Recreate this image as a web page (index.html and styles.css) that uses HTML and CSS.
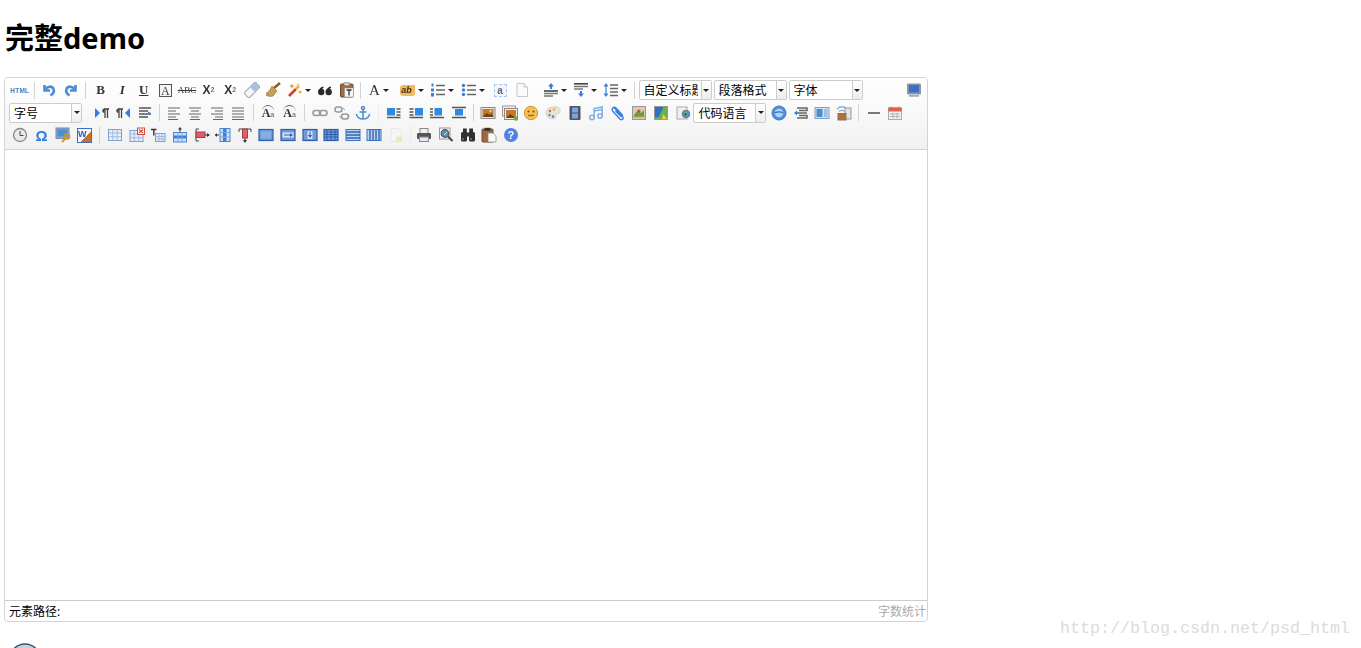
FILE: index.html
```html
<!DOCTYPE html>
<html lang="zh">
<head>
<meta charset="utf-8">
<title>完整demo</title>
<link rel="stylesheet" href="styles.css">
</head>
<body>
<svg class="defs" aria-hidden="true">
<symbol id="undo" viewBox="0 0 16 16"><path d="M3.5 3v5.5H9M4 8C6 4 11 3.500 12.500 7c1 2.500-.5 5-3 6.500" fill="none" stroke="#4a8ed8" stroke-width="2.600"/></symbol>
<symbol id="redo" viewBox="0 0 16 16"><path d="M12.500 3v5.500H7M12 8C10 4 5 3.500 3.500 7c-1 2.500.5 5 3 6.500" fill="none" stroke="#4a8ed8" stroke-width="2.600"/></symbol>
<symbol id="eraser" viewBox="0 0 16 16"><g transform="rotate(45 8 8)"><rect x="4.500" y="0" width="7" height="16" rx="1.500" fill="#f5f7fa" stroke="#9aa"/><rect x="5" y="0.500" width="6" height="7" fill="#a9bfe0"/></g></symbol>
<symbol id="brush" viewBox="0 0 16 16"><path d="M15 1L9 6" stroke="#8a5a2a" stroke-width="2.400"/><path d="M7 4l5 5-4 5c-2 1-6 0-7-1 2 0 3-1 3-1-1 0-2 0-3-1 2 0 4-3 6-7z" fill="#c9a05a" stroke="#8e6a30" stroke-width=".6"/></symbol>
<symbol id="wand" viewBox="0 0 16 16"><path d="M2 14l7-7" stroke="#d0402a" stroke-width="2.600"/><path d="M9 7l3-3" stroke="#e9b23a" stroke-width="2.600"/><path d="M5 2l1 1.500L7.500 4 6 5 5 6.500 4 5 2.500 4 4 3zM13 8l.7 1.200 1.300.8-1.300.8L13 12l-.7-1.200L11 10l1.300-.8z" fill="#f0a030"/><path d="M11 1l.5 1 1 .5-1 .5-.5 1-.5-1-1-.5 1-.5z" fill="#e8c040"/></symbol>
<symbol id="quote" viewBox="0 0 16 16"><g fill="#2a2a2a"><circle cx="4.200" cy="10" r="3.200"/><path d="M1.500 9.500C2 6.500 4 5 6.500 4.500v1.500C5 6.500 4 8 4.200 10z"/><circle cx="11.700" cy="10" r="3.200"/><path d="M9 9.500c.5-3 2.500-4.500 5-5v1.500c-1.500.5-2.500 2-2.300 4z"/></g></symbol>
<symbol id="pastet" viewBox="0 0 16 16"><rect x="1.500" y="2" width="12.500" height="13" rx="1" fill="#a56a3c" stroke="#6f4a2c"/><rect x="5" y="0.800" width="5.500" height="3" fill="#d8d8d8" stroke="#666" stroke-width=".6"/><rect x="5.500" y="6" width="9" height="9" fill="#f7f7f7" stroke="#888" stroke-width=".6"/><path d="M7.500 8h5M10 8v5.500" stroke="#333" stroke-width="1.300"/></symbol>
<symbol id="ol" viewBox="0 0 16 16"><path d="M6 3.500h9M6 8h9M6 12.500h9" stroke="#666" stroke-width="1.400"/><g fill="#3b82d6"><rect x="1.500" y="1.500" width="2" height="3"/><rect x="1" y="6.500" width="3" height="3"/><rect x="1" y="11" width="3" height="3.500"/></g></symbol>
<symbol id="ul" viewBox="0 0 16 16"><path d="M6 3.500h9M6 8h9M6 12.500h9" stroke="#666" stroke-width="1.400"/><g fill="#3b82d6"><circle cx="2.500" cy="3.500" r="1.700"/><circle cx="2.500" cy="8" r="1.700"/><circle cx="2.500" cy="12.500" r="1.700"/></g></symbol>
<symbol id="page" viewBox="0 0 16 16"><path d="M3 1.500h7l3.500 3.500v9.500H3z" fill="#fbfbfb" stroke="#c8c8c8"/><path d="M10 1.500V5h3.500" fill="#e9e9e9" stroke="#c8c8c8"/></symbol>
<symbol id="rt" viewBox="0 0 16 16"><path d="M8 1l3 3.500H9V7H7V4.500H5z" fill="#3b7fd4"/><path d="M1 9h14" stroke="#444" stroke-width="1.600"/><path d="M1 11.500h14M1 14h9" stroke="#777" stroke-width="1.400"/></symbol>
<symbol id="rb" viewBox="0 0 16 16"><path d="M1 1.800h14" stroke="#444" stroke-width="1.600"/><path d="M1 4.500h14M1 7h9" stroke="#777" stroke-width="1.400"/><path d="M8 15l3-3.500H9V9H7v2.500H5z" fill="#3b7fd4"/></symbol>
<symbol id="lh" viewBox="0 0 16 16"><path d="M3 1L.5 4.500h5zM3 15l2.500-3.500h-5z" fill="#3b7fd4"/><path d="M3 4v8" stroke="#3b7fd4" stroke-width="1.200"/><path d="M7 3h8M7 6.500h8M7 10h8M7 13.500h8" stroke="#666" stroke-width="1.300"/></symbol>
<symbol id="full" viewBox="0 0 16 16"><rect x="1" y="1.500" width="14" height="11" rx="1" fill="#8a96a6"/><rect x="3" y="3" width="10" height="7.500" fill="#3d6fc4"/><rect x="3" y="13" width="10" height="1.800" fill="#a5adb8"/></symbol>
<symbol id="ltr" viewBox="0 0 16 16"><path d="M1 3l5 5-5 5z" fill="#2f80e0"/><path d="M10 4h5M11 4v9M13.500 4v9" stroke="#444" stroke-width="1.300"/><path d="M10.500 3.500c-3 0-3 4.500 0 4.500z" fill="#444"/></symbol>
<symbol id="rtl" viewBox="0 0 16 16"><path d="M15 3l-5 5 5 5z" fill="#2f80e0"/><path d="M3 4h5M4 4v9M6.500 4v9" stroke="#444" stroke-width="1.300"/><path d="M3.500 3.500c-3 0-3 4.500 0 4.500z" fill="#444"/></symbol>
<symbol id="indent" viewBox="0 0 16 16"><path d="M2 3h12M2 6h9M2 9h12M2 12h9" stroke="#555" stroke-width="1.500"/><path d="M11 6.500l3 1.500-3 1.500z" fill="#3b7fd4"/></symbol>
<symbol id="al" viewBox="0 0 16 16"><path d="M2 3h12M2 6h8M2 9h12M2 12h8M2 14.500h10" stroke="#666" stroke-width="1.200"/></symbol>
<symbol id="ac" viewBox="0 0 16 16"><path d="M2 3h12M4 6h8M2 9h12M4 12h8M3 14.500h10" stroke="#666" stroke-width="1.200"/></symbol>
<symbol id="ar" viewBox="0 0 16 16"><path d="M2 3h12M6 6h8M2 9h12M6 12h8M4 14.500h10" stroke="#666" stroke-width="1.200"/></symbol>
<symbol id="aj" viewBox="0 0 16 16"><path d="M2 3h12M2 6h12M2 9h12M2 12h12M2 14.500h12" stroke="#666" stroke-width="1.200"/></symbol>
<symbol id="link" viewBox="0 0 16 16"><rect x="1" y="5.500" width="7.500" height="5" rx="2.500" fill="none" stroke="#9a9a9a" stroke-width="1.600"/><rect x="7.500" y="5.500" width="7.500" height="5" rx="2.500" fill="none" stroke="#9a9a9a" stroke-width="1.600"/></symbol>
<symbol id="unlink" viewBox="0 0 16 16"><rect x="1" y="2" width="7" height="5" rx="2.500" fill="none" stroke="#9a9a9a" stroke-width="1.600"/><rect x="7.500" y="9" width="7" height="5" rx="2.500" fill="none" stroke="#9a9a9a" stroke-width="1.600"/><path d="M9 3l2 2M5 11l2 2" stroke="#aaa"/></symbol>
<symbol id="anchor" viewBox="0 0 16 16"><g fill="none" stroke="#4f8fd0" stroke-width="1.600"><circle cx="8" cy="3" r="1.500"/><path d="M8 4.500V14M4.500 7h7M1.500 9c0 3 3 5 6.500 5s6.500-2 6.500-5"/></g></symbol>
<symbol id="il" viewBox="0 0 16 16"><rect x="1" y="3" width="8" height="7.500" fill="#2d8ae0"/><path d="M10.500 4h4M10.500 7h4M10.500 10h4M1 12.500h13.500" stroke="#555" stroke-width="1.300"/></symbol>
<symbol id="ir" viewBox="0 0 16 16"><rect x="7" y="3" width="8" height="7.500" fill="#2d8ae0"/><path d="M1.500 4h4M1.500 7h4M1.500 10h4M1.500 12.500H15" stroke="#555" stroke-width="1.300"/></symbol>
<symbol id="in" viewBox="0 0 16 16"><rect x="5.500" y="3" width="7.500" height="7.500" fill="#2d8ae0"/><path d="M1 4h3M1 7h3M1 10h3M1 12.500h14" stroke="#555" stroke-width="1.300"/></symbol>
<symbol id="ic" viewBox="0 0 16 16"><rect x="4" y="4" width="8" height="6.500" fill="#2d8ae0"/><path d="M1 2.500h14M1 12.500h14" stroke="#555" stroke-width="1.400"/></symbol>
<symbol id="image" viewBox="0 0 16 16"><rect x="1" y="2.500" width="14" height="11" fill="#e8e8e8" stroke="#8a8a8a"/><rect x="2.500" y="4" width="11" height="8" fill="#c07a2c"/><path d="M2.500 12l4-4 3 2 2-1.500 2 3.500z" fill="#70401c"/><circle cx="10.500" cy="6" r="1.200" fill="#f5d050"/></symbol>
<symbol id="multi" viewBox="0 0 16 16"><rect x="0.500" y="1" width="13" height="10" fill="#eee" stroke="#999"/><rect x="2.500" y="3.500" width="13" height="11" fill="#eee" stroke="#888"/><rect x="4" y="5" width="10" height="8" fill="#c9772c"/><path d="M4 13l4-4 3 2 3 2z" fill="#70401c"/><circle cx="14" cy="13.500" r="2.300" fill="#66b440"/></symbol>
<symbol id="emo" viewBox="0 0 16 16"><circle cx="8" cy="8" r="6.700" fill="#f4c056" stroke="#d8912f"/><circle cx="5.500" cy="6.500" r="1" fill="#7c4a1a"/><circle cx="10.500" cy="6.500" r="1" fill="#7c4a1a"/><path d="M5 10.500h6" stroke="#a65a1c" stroke-width="1.300"/></symbol>
<symbol id="scrawl" viewBox="0 0 16 16"><path d="M8 2c4-1 8 1 7 5-.5 2-3 1-4 2s1 3-1 4.500C6 15 1 12 1 8s3-5.500 7-6z" fill="#e8e4da" stroke="#bbb" stroke-width=".6"/><circle cx="5" cy="6" r="1.200" fill="#d85a4a"/><circle cx="9" cy="4.500" r="1.200" fill="#e8b830"/><circle cx="4.500" cy="10" r="1.200" fill="#5aa050"/><circle cx="8" cy="11.500" r="1.200" fill="#4a7ad0"/></symbol>
<symbol id="video" viewBox="0 0 16 16"><rect x="2.500" y="1" width="11" height="14" rx="1" fill="#4d5560"/><rect x="5" y="2.500" width="6" height="5" fill="#7ea3e0"/><rect x="5" y="8.500" width="6" height="5" fill="#7ea3e0"/></symbol>
<symbol id="music" viewBox="0 0 16 16"><g fill="none" stroke="#7eb0e4" stroke-width="1.500"><circle cx="4" cy="12.500" r="2.200"/><circle cx="12" cy="11" r="2.200"/><path d="M6.200 12.500V3.500l8-1.500v9"/><path d="M6.200 6l8-1.500"/></g></symbol>
<symbol id="attach" viewBox="0 0 16 16"><path d="M4 2.500l8.500 9c2 2.500-1 4-2.500 2.500L3 6.500C1 4 3.500 1 6 3l6 6.500c1 1.500-.5 2.500-1.500 1.500L5.500 6" fill="none" stroke="#3d80d8" stroke-width="1.400"/></symbol>
<symbol id="map" viewBox="0 0 16 16"><rect x="1.500" y="1.500" width="13" height="13" fill="#d6d0a8" stroke="#999"/><path d="M3 10l4-5 3 3 3-3v7H3z" fill="#6a9a50"/><circle cx="8" cy="6" r="1.600" fill="#d84a3a"/><path d="M2 12h12" stroke="#d8a030"/></symbol>
<symbol id="gmap" viewBox="0 0 16 16"><rect x="1.500" y="1.500" width="13" height="13" fill="#6ab050" stroke="#999"/><path d="M2 2h8c0 4-3 5-4 10H2z" fill="#2d70c0"/><path d="M10 9l4 5H9z" fill="#e8d040"/></symbol>
<symbol id="iframe" viewBox="0 0 16 16"><rect x="2" y="2" width="10" height="12" fill="#f0f0f0" stroke="#aaa"/><circle cx="11" cy="9" r="3.800" fill="#4a90d0" stroke="#5f7f96"/><path d="M9 8h3v3" stroke="#8fc060"/></symbol>
<symbol id="bg" viewBox="0 0 16 16"><circle cx="8" cy="8" r="7" fill="#4f92dc" stroke="#3f76b8"/><circle cx="8" cy="8" r="4.200" fill="#b6d4f4"/><path d="M4 8c2-1.500 6-1.500 8 0" stroke="#2f70c4" stroke-width="1.300" fill="none"/></symbol>
<symbol id="pbreak" viewBox="0 0 16 16"><path d="M1 8l3-2.500v5z" fill="#2f80e0"/><path d="M4 3h10v2.500H6M4 13h10v-2.500H6M4 8h10" fill="none" stroke="#666" stroke-width="1.500"/></symbol>
<symbol id="tpl" viewBox="0 0 16 16"><rect x="1" y="2.500" width="14" height="11" fill="#cfe0f4" stroke="#7ea0c8"/><rect x="2.500" y="4" width="6" height="8" fill="#4a8ed0"/><rect x="10" y="4" width="3.500" height="8" fill="#9cc0e8"/></symbol>
<symbol id="wimg" viewBox="0 0 16 16"><path d="M1 4c3-3 7-3 10 0M3 6.500c2-1.500 4-1.500 6 0" fill="none" stroke="#8ab0dc" stroke-width="1.300"/><rect x="9" y="3" width="6" height="11" fill="#e4e4e4" stroke="#999"/><rect x="2" y="8.500" width="8" height="6.500" fill="#b8702c" stroke="#777"/></symbol>
<symbol id="hr" viewBox="0 0 16 16"><path d="M2 8h12" stroke="#333" stroke-width="1.300"/></symbol>
<symbol id="date" viewBox="0 0 16 16"><rect x="1.500" y="3" width="13" height="11.500" fill="#f2f2ee" stroke="#aaa"/><rect x="1.500" y="2.500" width="13" height="4" fill="#e0604a"/><path d="M4 1.500v2M12 1.500v2" stroke="#888"/><path d="M3 9h10M3 11.500h10M6 7.500v6M10 7.500v6" stroke="#b5b5b5"/></symbol>
<symbol id="time" viewBox="0 0 16 16"><circle cx="8" cy="8" r="6.500" fill="#e9e9e9" stroke="#888" stroke-width="1.300"/><path d="M8 4v4.500h3.500" fill="none" stroke="#444"/></symbol>
<symbol id="key" viewBox="0 0 16 16"><rect x="1" y="1" width="13" height="10.500" fill="#7fa7dc" stroke="#889"/><rect x="2.500" y="2.500" width="10" height="7" fill="#4a8ed8"/><circle cx="12" cy="9.500" r="2.500" fill="none" stroke="#c9982c" stroke-width="1.600"/><path d="M10.500 11.500L7 15" stroke="#c9982c" stroke-width="1.800"/></symbol>
<symbol id="grid" viewBox="0 0 16 16"><rect x="1.500" y="2.500" width="13" height="11" fill="#e6effa" stroke="#7d9fce"/><path d="M1.500 6h13M1.500 9.800h13M5.800 2.500v11M10.200 2.500v11" stroke="#9db8de"/></symbol>
<symbol id="tdel" viewBox="0 0 16 16"><rect x="1" y="3.500" width="13" height="11" fill="#e6effa" stroke="#7d9fce"/><path d="M1 7h13M1 10.800h13M5.300 3.500v11M9.700 3.500v11" stroke="#9db8de"/><rect x="8.500" y="1" width="7" height="6.500" fill="#fff" stroke="#d84a3a"/><path d="M10 2.500l4 3.500M14 2.500l-4 3.500" stroke="#d84a3a" stroke-width="1.200"/></symbol>
<symbol id="ttitle" viewBox="0 0 16 16"><path d="M1 2.500h5.500M3.800 2.500v6" stroke="#333" stroke-width="1.400"/><rect x="5.500" y="6.500" width="9.500" height="8" fill="#e6effa" stroke="#7d9fce"/><path d="M5.500 9.500h9.500M5.500 12h9.500M9 6.500v8M12 6.500v8" stroke="#9db8de"/></symbol>
<symbol id="trow" viewBox="0 0 16 16"><path d="M8 0l2 2.500H8.500V6h-1V2.500H6z" fill="#333"/><rect x="1.500" y="5.500" width="13" height="9.500" fill="#cfe0f6" stroke="#4a86d0"/><rect x="1.500" y="8.500" width="13" height="3" fill="#3d80d8"/><path d="M6 5.500v9.500M10 5.500v9.500" stroke="#7da8dc"/></symbol>
<symbol id="tdrow" viewBox="0 0 16 16"><path d="M2 2v12M2 2h3M2 14h3" fill="none" stroke="#444"/><rect x="2" y="5" width="9" height="5.500" fill="#e0606a" stroke="#a83a44"/><path d="M11 8h3" stroke="#333"/><path d="M13 6l3 2-3 2z" fill="#333"/></symbol>
<symbol id="tcol" viewBox="0 0 16 16"><rect x="5" y="1.500" width="10" height="13" fill="#cfe0f6" stroke="#4a86d0"/><rect x="8" y="1.500" width="3.500" height="13" fill="#3d80d8"/><path d="M5 5.500h10M5 10h10" stroke="#7da8dc"/><path d="M0 8h4" stroke="#333"/><path d="M2 6L0 8l2 2z" fill="#333"/></symbol>
<symbol id="tdcol" viewBox="0 0 16 16"><path d="M2 5V2h12v3" fill="none" stroke="#444"/><rect x="5.500" y="2" width="5" height="9" fill="#e0606a" stroke="#a83a44"/><path d="M8 11v3" stroke="#333"/><path d="M6 13l2 3 2-3z" fill="#333"/></symbol>
<symbol id="tm" viewBox="0 0 16 16"><rect x="1" y="2.500" width="14" height="11" fill="#6f9bdc" stroke="#2f5fa8" stroke-width="1.200"/><rect x="3" y="4.500" width="10" height="7" fill="#85aee6"/></symbol>
<symbol id="tr" viewBox="0 0 16 16"><rect x="1" y="2.500" width="14" height="11" fill="#6f9bdc" stroke="#2f5fa8" stroke-width="1.200"/><rect x="2.500" y="5.500" width="11" height="5" fill="#d4e4f8"/><path d="M4 8h6" stroke="#2f5fa8"/><path d="M10 6l3 2-3 2z" fill="#2f5fa8"/></symbol>
<symbol id="td" viewBox="0 0 16 16"><rect x="1" y="2.500" width="14" height="11" fill="#6f9bdc" stroke="#2f5fa8" stroke-width="1.200"/><rect x="5.500" y="4" width="5" height="8" fill="#d4e4f8"/><path d="M8 4.500v4" stroke="#2f5fa8"/><path d="M6 8l2 3 2-3z" fill="#2f5fa8"/></symbol>
<symbol id="tg" viewBox="0 0 16 16"><rect x="1" y="2.500" width="14" height="11" fill="#6f9bdc" stroke="#2f5fa8" stroke-width="1.200"/><path d="M1 5h14M1 7.500h14M1 10h14M4 2.500v11M8 2.500v11M12 2.500v11" stroke="#23509c" stroke-width=".8"/></symbol>
<symbol id="th" viewBox="0 0 16 16"><rect x="1" y="2.500" width="14" height="11" fill="#bcd2f0" stroke="#3d72bc"/><path d="M1 5h14M1 8h14M1 11h14" stroke="#2f66b4" stroke-width="1.400"/></symbol>
<symbol id="tv" viewBox="0 0 16 16"><rect x="1" y="2.500" width="14" height="11" fill="#bcd2f0" stroke="#3d72bc"/><path d="M4 2.500v11M7 2.500v11M10 2.500v11M13 2.500v11" stroke="#2f66b4" stroke-width="1.400"/></symbol>
<symbol id="faded" viewBox="0 0 16 16"><path d="M3 1.500h7l3.500 3.500v9.500H3z" fill="#f6f6f6" stroke="#e6e6e6"/><rect x="8" y="9.500" width="6" height="5" fill="#f0e6b8"/></symbol>
<symbol id="print" viewBox="0 0 16 16"><rect x="4" y="1.500" width="8" height="5" fill="#f2f2f2" stroke="#888"/><rect x="1" y="6" width="14" height="6" rx="1" fill="#555"/><rect x="3.500" y="10" width="9" height="4.500" fill="#dfe8f4" stroke="#888"/></symbol>
<symbol id="preview" viewBox="0 0 16 16"><rect x="1.500" y="1" width="10.500" height="11" fill="#f2f2f2" stroke="#999"/><circle cx="7" cy="6.500" r="3.800" fill="#4a92c8" stroke="#555" stroke-width="1.200"/><path d="M6 8l3-3" stroke="#d0e0a0"/><path d="M10 9.500l4.500 4.500" stroke="#444" stroke-width="2"/></symbol>
<symbol id="search" viewBox="0 0 16 16"><g fill="#2f2f2f"><rect x="3" y="1.500" width="3.800" height="5"/><rect x="9.200" y="1.500" width="3.800" height="5"/><rect x="1" y="5" width="6" height="9.500" rx="1.500"/><rect x="9" y="5" width="6" height="9.500" rx="1.500"/><rect x="6" y="5.500" width="4" height="4"/></g><path d="M3 11v2M11 11v2" stroke="#999"/></symbol>
<symbol id="paste" viewBox="0 0 16 16"><rect x="1" y="2" width="11" height="13" rx="1" fill="#a5673a" stroke="#6f4a2c"/><rect x="3.500" y="0.800" width="6" height="3" fill="#333"/><path d="M7 6h5l3 3v6H7z" fill="#f8f8f8" stroke="#888" stroke-width=".7"/></symbol>
</svg>

<h1 class="title">完整demo</h1>

<div class="editor">
  <div class="toolbar">
    <div class="row">
      <span class="b"><span class="html">HTML</span></span><i class="sep mid"></i>
      <span class="b"><svg class="ic"><use href="#undo"/></svg></span>
      <span class="b"><svg class="ic"><use href="#redo"/></svg></span><i class="sep mid"></i>
      <span class="b glyph bold">B</span>
      <span class="b glyph ital">I</span>
      <span class="b glyph und">U</span>
      <span class="b"><span class="boxed">A</span></span>
      <span class="b glyph strike">ABC</span>
      <span class="b glyph sans">X<sup class="bl">2</sup></span>
      <span class="b glyph sans">X<sub class="bl">2</sub></span>
      <span class="b"><svg class="ic"><use href="#eraser"/></svg></span>
      <span class="b"><svg class="ic"><use href="#brush"/></svg></span>
      <span class="b split s30"><svg class="ic"><use href="#wand"/></svg><i class="tri"></i></span>
      <span class="b"><svg class="ic"><use href="#quote"/></svg></span>
      <span class="b"><svg class="ic"><use href="#pastet"/></svg></span><i class="sep"></i>
      <span class="b split s33"><span class="letter">A</span><i class="tri"></i></span>
      <span class="b split s30"><span class="hl">ab</span><i class="tri"></i></span>
      <span class="b split"><svg class="ic"><use href="#ol"/></svg><i class="tri"></i></span>
      <span class="b split"><svg class="ic"><use href="#ul"/></svg><i class="tri"></i></span>
      <span class="b"><span class="dashed">a</span></span>
      <span class="b"><svg class="ic"><use href="#page"/></svg></span>
      <i class="gap"></i>
      <span class="b split s30"><svg class="ic"><use href="#rt"/></svg><i class="tri"></i></span>
      <span class="b split s30"><svg class="ic"><use href="#rb"/></svg><i class="tri"></i></span>
      <span class="b split"><svg class="ic"><use href="#lh"/></svg><i class="tri"></i></span><i class="sep mid"></i>
      <span class="combo"><span class="lbl">自定义标题</span><span class="drop"><i class="tri"></i></span></span>
      <span class="combo"><span class="lbl">段落格式</span><span class="drop"><i class="tri"></i></span></span>
      <span class="combo c3"><span class="lbl">字体</span><span class="drop"><i class="tri"></i></span></span>
      <span class="b end"><svg class="ic"><use href="#full"/></svg></span>
    </div>
    <div class="row">
      <span class="combo"><span class="lbl">字号</span><span class="drop"><i class="tri"></i></span></span>
      <i class="gap"></i>
      <span class="b"><svg class="ic"><use href="#ltr"/></svg></span>
      <span class="b"><svg class="ic"><use href="#rtl"/></svg></span>
      <span class="b"><svg class="ic"><use href="#indent"/></svg></span><i class="sep"></i>
      <span class="b"><svg class="ic"><use href="#al"/></svg></span>
      <span class="b"><svg class="ic"><use href="#ac"/></svg></span>
      <span class="b"><svg class="ic"><use href="#ar"/></svg></span>
      <span class="b"><svg class="ic"><use href="#aj"/></svg></span><i class="sep mid"></i>
      <span class="b"><span class="fs">A<small>a</small></span></span>
      <span class="b"><span class="fs">A<small>a</small></span></span><i class="sep wide"></i>
      <span class="b"><svg class="ic"><use href="#link"/></svg></span>
      <span class="b"><svg class="ic"><use href="#unlink"/></svg></span>
      <span class="b"><svg class="ic"><use href="#anchor"/></svg></span><i class="sep faint wide"></i>
      <span class="b"><svg class="ic"><use href="#il"/></svg></span>
      <span class="b"><svg class="ic"><use href="#ir"/></svg></span>
      <span class="b"><svg class="ic"><use href="#in"/></svg></span>
      <span class="b"><svg class="ic"><use href="#ic"/></svg></span><i class="sep mid"></i>
      <span class="b"><svg class="ic"><use href="#image"/></svg></span>
      <span class="b"><svg class="ic"><use href="#multi"/></svg></span>
      <span class="b"><svg class="ic"><use href="#emo"/></svg></span>
      <span class="b"><svg class="ic"><use href="#scrawl"/></svg></span>
      <span class="b"><svg class="ic"><use href="#video"/></svg></span>
      <span class="b"><svg class="ic"><use href="#music"/></svg></span>
      <span class="b"><svg class="ic"><use href="#attach"/></svg></span>
      <span class="b"><svg class="ic"><use href="#map"/></svg></span>
      <span class="b"><svg class="ic"><use href="#gmap"/></svg></span>
      <span class="b"><svg class="ic"><use href="#iframe"/></svg></span>
      <span class="combo"><span class="lbl">代码语言</span><span class="drop"><i class="tri"></i></span></span>
      <span class="b"><svg class="ic"><use href="#bg"/></svg></span>
      <span class="b"><svg class="ic"><use href="#pbreak"/></svg></span>
      <span class="b"><svg class="ic"><use href="#tpl"/></svg></span>
      <span class="b"><svg class="ic"><use href="#wimg"/></svg></span><i class="sep mid"></i>
      <span class="b"><svg class="ic"><use href="#hr"/></svg></span>
      <span class="b"><svg class="ic"><use href="#date"/></svg></span>
    </div>
    <div class="row">
      <span class="b"><svg class="ic"><use href="#time"/></svg></span>
      <span class="b glyph omega">Ω</span>
      <span class="b"><svg class="ic"><use href="#key"/></svg></span>
      <span class="b"><span class="wd">W</span></span><i class="sep wide"></i>
      <span class="b"><svg class="ic"><use href="#grid"/></svg></span>
      <span class="b"><svg class="ic"><use href="#tdel"/></svg></span>
      <span class="b"><svg class="ic"><use href="#ttitle"/></svg></span>
      <span class="b"><svg class="ic"><use href="#trow"/></svg></span>
      <span class="b"><svg class="ic"><use href="#tdrow"/></svg></span>
      <span class="b"><svg class="ic"><use href="#tcol"/></svg></span>
      <span class="b"><svg class="ic"><use href="#tdcol"/></svg></span>
      <span class="b"><svg class="ic"><use href="#tm"/></svg></span>
      <span class="b"><svg class="ic"><use href="#tr"/></svg></span>
      <span class="b"><svg class="ic"><use href="#td"/></svg></span>
      <span class="b"><svg class="ic"><use href="#tg"/></svg></span>
      <span class="b"><svg class="ic"><use href="#th"/></svg></span>
      <span class="b"><svg class="ic"><use href="#tv"/></svg></span>
      <span class="b"><svg class="ic"><use href="#faded"/></svg></span><i class="sep faint"></i>
      <span class="b"><svg class="ic"><use href="#print"/></svg></span>
      <span class="b"><svg class="ic"><use href="#preview"/></svg></span>
      <span class="b"><svg class="ic"><use href="#search"/></svg></span>
      <span class="b"><svg class="ic"><use href="#paste"/></svg></span>
      <span class="b"><span class="help">?</span></span>
    </div>
  </div>
  <div class="content"></div>
  <div class="status">
    <span class="path">元素路径:</span>
    <span class="count">字数统计</span>
  </div>
</div>

<svg class="avatar" viewBox="0 0 32 32" aria-hidden="true"><circle cx="16" cy="16" r="15" fill="#c7d3dc" stroke="#3d5a72" stroke-width="1.500"/><path d="M4 12c6-6 18-6 24 0" fill="none" stroke="#eef3f6" stroke-width="2"/></svg>

<div class="watermark">http://blog.csdn.net/psd_html</div>
</body>
</html>
```
FILE: styles.css
```css
html, body {
  margin: 0;
  height: 648px;
  overflow: hidden;
  background: #fff;
}
body {
  position: relative;
  padding: 0 0 0 4px;
  font-family: "Noto Sans", "Noto Sans CJK SC", sans-serif;
  color: #000;
}
.defs {
  position: absolute;
  width: 0;
  height: 0;
}
.title {
  margin: 0;
  padding: 16px 0 0 1px;
  height: 77px;
  box-sizing: border-box;
  font-size: 29px;
  line-height: 44px;
  font-weight: 700;
}
.editor {
  width: 924px;
  height: 545px;
  box-sizing: border-box;
  border: 1px solid #d4d4d4;
  border-radius: 4px;
  display: flex;
  flex-direction: column;
  overflow: hidden;
}
.toolbar {
  height: 72px;
  box-sizing: border-box;
  padding: 1px 0 0 4px;
  background: linear-gradient(#fff, #f1f1f1);
  border-bottom: 1px solid #d4d4d4;
  box-shadow: 0 1px 3px #ccc;
}
.row {
  display: flex;
  align-items: center;
  height: 22.5px;
}
.b {
  flex: none;
  width: 21.6px;
  height: 20px;
  display: flex;
  align-items: center;
  justify-content: center;
  filter: blur(.3px);
}
.b.split {
  width: 31px;
  justify-content: flex-start;
  padding-left: 3px;
  box-sizing: border-box;
}
.b.s30 {
  width: 30px;
}
.b.s33 {
  width: 33px;
}
.b.end {
  margin-left: auto;
  margin-right: 2px;
}
.ic {
  flex: none;
  width: 16px;
  height: 16px;
}
.tri {
  flex: none;
  width: 0;
  height: 0;
  margin-left: 2px;
  border: 3px solid transparent;
  border-top: 3px solid #222;
  border-bottom: 0;
}
.sep {
  flex: none;
  width: 1px;
  height: 17px;
  margin: 0 3px;
  background: #d2d2d2;
}
.sep.mid {
  margin: 0 3.5px;
}
.sep.wide {
  margin: 0 4px;
}
.sep.faint {
  background: #ececec;
}
.gap {
  flex: none;
  width: 7px;
}
.html {
  font: 700 6.500px "Liberation Sans", sans-serif;
  letter-spacing: .2px;
  color: #3f7fbe;
}
.glyph {
  font: 700 13px "Liberation Serif", serif;
  color: #333;
}
.glyph.ital {
  font-style: italic;
}
.glyph.und {
  text-decoration: underline;
}
.glyph.strike {
  font-size: 9px;
  font-weight: 400;
  text-decoration: line-through;
}
.glyph.sans {
  font: 700 12px "Liberation Sans", sans-serif;
}
.glyph.omega {
  font: 700 15px "Liberation Sans", sans-serif;
  color: #2f7fd8;
}
.bl {
  font-size: 7px;
  color: #2f7fd8;
  line-height: 0;
}
.boxed {
  width: 13px;
  height: 13px;
  box-sizing: border-box;
  border: 1px solid #555;
  background: #f4f4f4;
  text-align: center;
  font: 400 12px/12px "Liberation Serif", serif;
  color: #444;
}
.letter {
  flex: none;
  width: 14px;
  text-align: center;
  font: 400 15px "Liberation Serif", serif;
  color: #333;
}
.hl {
  flex: none;
  width: 15px;
  height: 11px;
  margin-right: 1px;
  border-radius: 3px 0 3px 3px;
  background: #f2b860;
  box-sizing: border-box;
  font: italic 700 9px/10px "Liberation Sans", sans-serif;
  color: #40301a;
  text-align: left;
  padding-left: 1px;
}
.dashed {
  width: 13px;
  height: 13px;
  box-sizing: border-box;
  border: 1px dashed #a9c6ec;
  background: #f3f7fd;
  text-align: center;
  font: 700 10px/11px "Liberation Sans", sans-serif;
  color: #667;
}
.fs {
  display: block;
  font: 700 12px/14px "Liberation Serif", serif;
  color: #333;
  border-top: 1px solid #666;
  border-radius: 7px 7px 0 0;
}
.fs small {
  font: 400 7px "Liberation Sans", sans-serif;
  color: #555;
}
.wd {
  width: 15px;
  height: 15px;
  box-sizing: border-box;
  border: 1px solid #3d6fc4;
  background: linear-gradient(135deg, #f7f7f7 60%, #c8702c 60%);
  font: 700 9px/11px "Liberation Sans", sans-serif;
  color: #2d5cb0;
}
.help {
  width: 14px;
  height: 14px;
  border-radius: 50%;
  background: #4f82e4;
  text-align: center;
  font: 700 11px/14px "Liberation Sans", sans-serif;
  color: #fff;
}
.combo {
  flex: none;
  width: 73px;
  height: 20px;
  box-sizing: border-box;
  margin-right: 2px;
  display: flex;
  border: 1px solid #ccc;
  border-radius: 2px;
  background: #fff;
  font-size: 12px;
  line-height: 20px;
}
.combo.c3 {
  width: 74px;
  margin-right: 0;
}
.lbl {
  flex: 1;
  min-width: 0;
  margin: 0 3px 0 4px;
  overflow: hidden;
  white-space: nowrap;
}
.drop {
  flex: none;
  width: 9px;
  display: flex;
  align-items: center;
  justify-content: center;
  border-left: 1px solid #ccc;
  background: linear-gradient(#fff, #ededed);
}
.drop .tri {
  margin: 0;
}
.content {
  flex: 1;
  background: #fff;
}
.status {
  height: 21px;
  box-sizing: border-box;
  border-top: 1px solid #ccc;
  padding: 0 1px 0 4px;
  display: flex;
  justify-content: space-between;
  font-size: 12px;
  line-height: 21px;
}
.count {
  color: #aaa;
}
.avatar {
  display: block;
  margin: 21px 0 0 5px;
  width: 32px;
  height: 32px;
}
.watermark {
  position: absolute;
  left: 1060px;
  top: 619px;
  font: 16.670px "Liberation Mono", monospace;
  color: #dcdcdc;
  white-space: nowrap;
}
```
